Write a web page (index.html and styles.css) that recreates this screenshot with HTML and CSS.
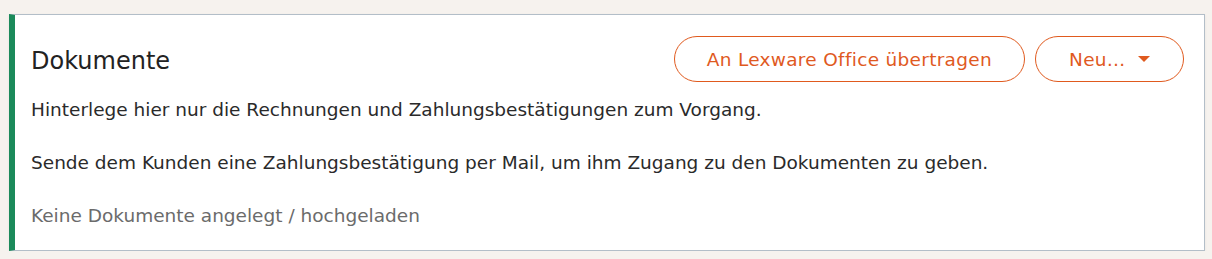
FILE: index.html
```html
<!DOCTYPE html>
<html lang="de">
<head>
<meta charset="utf-8">
<link rel="stylesheet" href="styles.css">
</head>
<body>
<section class="card">
  <div class="header">
    <h2 class="title">Dokumente</h2>
    <div class="actions">
      <button class="btn">An Lexware Office übertragen</button>
      <button class="btn btn-drop">Neu… <span class="caret"></span></button>
    </div>
  </div>
  <p class="text">Hinterlege hier nur die Rechnungen und Zahlungsbestätigungen zum Vorgang.</p>
  <p class="text">Sende dem Kunden eine Zahlungsbestätigung per Mail, um ihm Zugang zu den Dokumenten zu geben.</p>
  <p class="text muted">Keine Dokumente angelegt / hochgeladen</p>
</section>
</body>
</html>
```
FILE: styles.css
```css
html, body {
  margin: 0;
  padding: 0;
  background: #f6f2ee;
  font-family: "DejaVu Sans", "Noto Sans", sans-serif;
}
body {
  padding: 14px 7px 0 9px;
}
.card {
  box-sizing: border-box;
  width: 1196px;
  height: 237px;
  background: #fff;
  border: 1px solid #b3bec8;
  border-left: 6px solid #1b8a5a;
  padding: 21px 20px 0 16px;
  box-shadow: 0 1px 3px rgba(0,0,0,0.06);
}
.header {
  display: flex;
  justify-content: space-between;
  align-items: center;
  height: 46px;
}
.title {
  margin: 0;
  padding-top: 3px;
  font-size: 24px;
  font-weight: normal;
  color: #222;
}
.actions {
  display: flex;
  gap: 10px;
}
.btn {
  box-sizing: border-box;
  height: 46px;
  border: 1px solid #e05a1e;
  border-radius: 23px;
  background: #fff;
  color: #df5a1f;
  font-family: inherit;
  font-size: 18.5px;
  letter-spacing: 0.3px;
  padding: 0 32px;
  display: flex;
  align-items: center;
}
.btn-drop {
  width: 149px;
  padding: 0 0 0 33px;
  gap: 12px;
}
.caret {
  width: 0;
  height: 0;
  border-left: 6px solid transparent;
  border-right: 6px solid transparent;
  border-top: 6px solid #df5a1f;
}
.text {
  margin: 0;
  font-size: 18.5px;
  color: #2a2a2a;
  line-height: 53px;
}
.header + .text {
  margin-top: 1px;
}
.muted {
  color: #6b6b6b;
}
```
